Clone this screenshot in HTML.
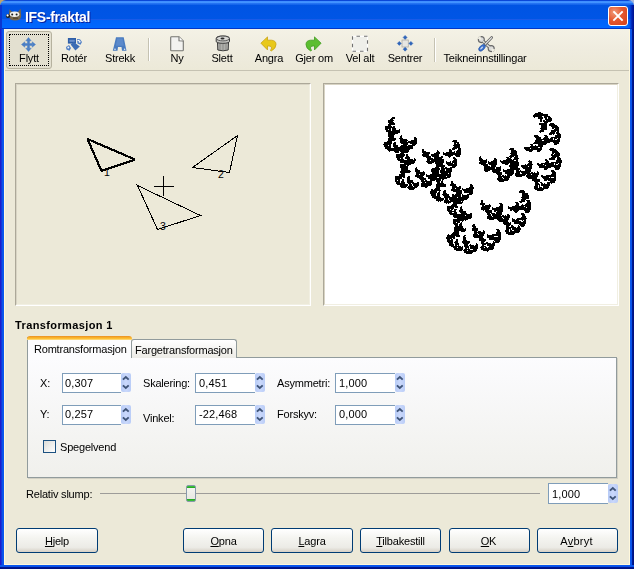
<!DOCTYPE html>
<html><head><meta charset="utf-8">
<style>
*{margin:0;padding:0;box-sizing:border-box}
html,body{width:634px;height:569px;overflow:hidden;background:#ECE9D8}
body{position:relative;font-family:"Liberation Sans",sans-serif;font-size:11px;color:#000}
.a{position:absolute}
.t{position:absolute;will-change:transform;font-size:11px;line-height:13px;white-space:nowrap;letter-spacing:-0.2px}
.c{text-align:center}
#title{left:0;top:0;width:634px;height:29px;border-radius:6px 6px 0 0;
background:linear-gradient(#0A47D8 0px,#0A47D8 1px,#3D8CFF 1px,#4496FF 3px,#2B7AF7 3px,#0E5FE8 5px,#0054E3 5px,#0055E5 16px,#0056E4 19px,#1A5BE8 19px,#1A5BE8 20px,#0063F8 20px,#0068FF 28px,#0037C8 28px,#0037C8 29px)}
#bl{left:0;top:29px;width:4px;height:540px;background:linear-gradient(90deg,#1C1CCC 0,#1C1CCC 1px,#0A50E8 2px,#0A5AF0 4px)}
#br{left:630px;top:29px;width:4px;height:540px;background:linear-gradient(90deg,#0A5AF0 0,#0A50E8 2px,#001C9A 2px,#000E7A 4px)}
#bb{left:0;top:565px;width:634px;height:4px;background:linear-gradient(#0A5AF0 0,#0A50E8 2px,#001C9A 2px,#000E7A 4px)}
#client{left:4px;top:29px;width:626px;height:536px;background:#ECE9D8;border-left:1px solid #FFF8DC;border-right:1px solid #FFF8DC;border-bottom:1px solid #FFF8DC}
#toolbar{left:5px;top:29px;width:624px;height:42px;background:linear-gradient(#F4F2E6 0,#EFECDF 50%,#ECE9D8 100%);border-bottom:1px solid #C5C2B2}
.sep{position:absolute;width:1px;background:#C5C2B2;border-right:1px solid #FFFFFF;width:2px}
.frame{position:absolute;border-top:1px solid #ACA899;border-left:1px solid #ACA899;border-right:1px solid #FFFFFF;border-bottom:1px solid #FFFFFF}
.frame>.in{position:absolute;left:0;top:0;right:0;bottom:0;border-top:1px solid #D8D4C4;border-left:1px solid #D8D4C4;border-right:1px solid #F1EFE2;border-bottom:1px solid #F1EFE2}
.entry{position:absolute;height:20px;background:#FFF;border:1px solid #7F9DB9;border-right:none}
.spin{position:absolute;width:10px;height:19px;border-radius:2px;background:linear-gradient(90deg,#B7CBF6,#CAD8FB 50%,#BACDF7)}
.btn{position:absolute;top:528px;height:25px;border:1px solid #003C74;border-radius:3px;background:linear-gradient(#FFFFFF 0,#F4F4F0 40%,#ECEBE6 80%,#D6D0C5 100%);text-align:center}
.u{text-decoration:underline}
</style></head><body>
<div class="a" style="left:0;top:0;width:10px;height:10px;background:#BFA46C"></div>
<div class="a" style="left:624px;top:0;width:10px;height:10px;background:#A9B7DA"></div>
<div id="title" class="a">
  <svg class="a" style="left:3px;top:5px" width="22" height="20" viewBox="0 0 22 20">
    <path d="M6 9 L6.5 4.3 L9 6.8 L15 6.8 L17.6 3.8 L18.2 11 Q18 15.6 12 15.6 Q7 15.6 6 12Z" fill="#76674C"/>
    <ellipse cx="11.6" cy="9.2" rx="4.8" ry="2.7" fill="#F2F2EE"/>
    <circle cx="9.2" cy="9.5" r="1" fill="#1a1a1a"/><circle cx="13.6" cy="9.5" r="1" fill="#1a1a1a"/>
    <circle cx="5" cy="11" r="2.1" fill="#1a1a1a"/><circle cx="4.6" cy="10.4" r="1.1" fill="#fff"/>
    <rect x="10" y="12.4" width="5" height="1.6" fill="#5A4A30"/>
  </svg>
  <div class="a" style="will-change:transform;left:25px;top:9px;color:#fff;font-weight:bold;font-size:14px;line-height:16px;text-shadow:1px 1px 0 #0A1E9A;letter-spacing:-0.3px">IFS-fraktal</div>
  <div class="a" style="left:608px;top:6px;width:20px;height:20px;border:1px solid #fff;border-radius:3px;background:radial-gradient(circle at 30% 30%,#F09A7A 0,#E5582F 45%,#D2401A 100%)">
    <svg class="a" style="left:0;top:0" width="18" height="18"><path d="M5 5 L13 13 M13 5 L5 13" stroke="#fff" stroke-width="1.8" stroke-linecap="square"/></svg>
  </div>
</div>
<div class="a" style="left:628px;top:5px;width:6px;height:24px;background:linear-gradient(90deg,rgba(0,40,200,0) 0,rgba(0,40,200,0.35) 2px,#0020B0 4px,#00128A 6px)"></div><div class="a" style="left:0;top:5px;width:2px;height:24px;background:#0A36D0"></div>
<div id="bl" class="a"></div><div id="br" class="a"></div><div id="bb" class="a"></div>
<div id="client" class="a"></div>
<div id="toolbar" class="a"></div>

<!-- toolbar -->
<div class="a" style="left:6px;top:31px;width:46px;height:38px;border:1px solid #B6B29F;border-radius:3px;background:#E3E0D0"></div>
<div class="a" style="left:9px;top:34px;width:40px;height:32px;border:1px dotted #000"></div>
<svg class="a" style="left:21px;top:37px" width="15" height="15" viewBox="0 0 15 15">
  <path d="M7.5 0.5 L10.2 3.8 L4.8 3.8Z M7.5 14.5 L10.2 11.2 L4.8 11.2Z M0.5 7.5 L3.8 4.8 L3.8 10.2Z M14.5 7.5 L11.2 4.8 L11.2 10.2Z M6.5 3.5 H8.5 V6.5 H11.5 V8.5 H8.5 V11.5 H6.5 V8.5 H3.5 V6.5 H6.5Z" fill="#4A7EC4" stroke="#4A7EC4" stroke-width="0.5" stroke-linejoin="round"/>
</svg>
<div class="t c" style="left:8px;width:42px;top:52px">Flytt</div>

<svg class="a" style="left:63px;top:34px" width="22" height="20" viewBox="0 0 22 20">
  <rect x="4.9" y="4" width="8.1" height="5.6" fill="#2F5FA8"/><rect x="6.4" y="5.8" width="5.3" height="2" fill="#6A90CC"/>
  <path d="M3 13 L6 11 L8 14 L6.5 16.8 L3.5 15.5Z" fill="#4F7EC4"/><circle cx="5.3" cy="13.6" r="1" fill="#F4F6FA"/>
  <path d="M14 5 L17 5.2 L19 8 L17.5 10.8 L14.5 9.5Z" fill="#4F7EC4"/><circle cx="16.6" cy="7.8" r="1" fill="#F4F6FA"/><rect x="14.5" y="6" width="2" height="1" fill="#fff"/>
  <path d="M10.8 8 L16.8 12.4 L12.4 16.6 L7.6 10.4Z" fill="#3D6DB5"/>
</svg>
<div class="t c" style="left:53px;width:42px;top:52px">Rotér</div>

<svg class="a" style="left:105px;top:32px" width="24" height="22" viewBox="0 0 24 22">
  <path d="M11 5.2 L18.7 5.2 L21.5 18.7 L17 18.7 L16.5 15 L13 15 L12.5 18.7 L7.8 18.7Z" fill="#4A7CC0"/>
  <path d="M12.2 6.5 L17.5 6.5 L18.8 13.8 L10.8 13.8Z" fill="#5C8ACB"/>
  <circle cx="10" cy="17.2" r="0.8" fill="#E8EEF8"/><circle cx="19.6" cy="17.2" r="0.8" fill="#E8EEF8"/>
</svg>
<div class="t c" style="left:98px;width:44px;top:52px">Strekk</div>

<div class="sep" style="left:148px;top:38px;height:23px"></div>

<svg class="a" style="left:166px;top:33px" width="22" height="20" viewBox="0 0 22 20">
  <path d="M4.7 4.5 Q4.7 3.7 5.5 3.7 L13 3.7 L17.3 8 L17.3 17 Q17.3 17.8 16.5 17.8 L5.5 17.8 Q4.7 17.8 4.7 17Z" fill="#F2F2F0" stroke="#747470" stroke-width="1.1"/>
  <path d="M13 3.7 L13 7.8 L17.3 8" fill="#fff" stroke="#747470" stroke-width="1.1"/>
</svg>
<div class="t c" style="left:155px;width:44px;top:52px">Ny</div>

<svg class="a" style="left:212px;top:33px" width="22" height="20" viewBox="0 0 22 20">
  <path d="M5.5 9.5 L16.5 9.5 L16.2 17 Q11 18.6 5.8 17Z" fill="#B0B0AC" stroke="#3A3A3A" stroke-width="1"/>
  <path d="M8 11 V17 M11 11 V17.5 M14 11 V17" stroke="#8A8A86" stroke-width="1"/>
  <path d="M4.2 5.5 Q4.2 3 10.9 3 Q17.5 3 17.5 5.5 V8.3 Q17.5 10.3 10.9 10.3 Q4.2 10.3 4.2 8.3Z" fill="#C4C4C0" stroke="#3A3A3A" stroke-width="1"/>
  <ellipse cx="10.9" cy="5.5" rx="6.4" ry="2.4" fill="#D8D8D4" stroke="#3A3A3A" stroke-width="0.8"/>
  <ellipse cx="10.5" cy="5.5" rx="2" ry="1" fill="#2A2A2A"/>
</svg>
<div class="t c" style="left:200px;width:44px;top:52px">Slett</div>

<svg class="a" style="left:257px;top:33px" width="22" height="20" viewBox="0 0 22 20">
  <path d="M3.9 10.2 L10.5 3.9 L10.5 7.2 L14.5 7.2 Q19 7.5 19 11.5 Q19 15.5 14.2 18 L13.5 17.5 Q15.5 14.5 14 13.5 Q13 13 11.5 13 L10.5 13 L10.5 16.9Z" fill="#E8C81A" stroke="#C9A212" stroke-width="0.8" stroke-linejoin="round"/>
</svg>
<div class="t c" style="left:246px;width:46px;top:52px">Angra</div>

<svg class="a" style="left:302px;top:33px" width="22" height="20" viewBox="0 0 22 20">
  <path transform="translate(23,0) scale(-1,1)" d="M3.9 10.2 L10.5 3.9 L10.5 7.2 L14.5 7.2 Q19 7.5 19 11.5 Q19 15.5 14.2 18 L13.5 17.5 Q15.5 14.5 14 13.5 Q13 13 11.5 13 L10.5 13 L10.5 16.9Z" fill="#5CBE30" stroke="#3F9A1E" stroke-width="0.8" stroke-linejoin="round"/>
</svg>
<div class="t c" style="left:290px;width:48px;top:52px">Gjer om</div>

<svg class="a" style="left:349px;top:33px" width="22" height="20" viewBox="0 0 22 20">
  <rect x="3.5" y="3.3" width="15" height="15" fill="#EFEFEA" stroke="#FFFFFF" stroke-width="1.2"/>
  <rect x="3.5" y="3.3" width="15" height="15" fill="none" stroke="#707070" stroke-width="1.1" stroke-dasharray="3.5 4" stroke-dashoffset="-4"/>
</svg>
<div class="t c" style="left:336px;width:48px;top:52px">Vel alt</div>

<svg class="a" style="left:394px;top:33px" width="22" height="20" viewBox="0 0 22 20">
  <rect x="8" y="7" width="6.3" height="7" fill="#E6E6E2" stroke="#ABABA6" stroke-width="0.8"/>
  <path d="M11.1 2.4 L13.1 4.4 L11.1 6.4 L9.1 4.4Z M11.1 14.2 L13.1 16.2 L11.1 18.2 L9.1 16.2Z M5.3 8.4 L7.3 10.4 L5.3 12.4 L3.3 10.4Z M16.9 8.4 L18.9 10.4 L16.9 12.4 L14.9 10.4Z" fill="#2F64B8" stroke="#2F64B8" stroke-width="0.5" stroke-linejoin="round"/>
</svg>
<div class="t c" style="left:380px;width:50px;top:52px">Sentrer</div>

<div class="sep" style="left:434px;top:38px;height:24px"></div>

<svg class="a" style="left:472px;top:32px" width="28" height="22" viewBox="0 0 28 22">
  <path d="M11.3 9.6 L17.6 15.2" stroke="#666" stroke-width="3.3" stroke-linecap="round"/>
  <circle cx="9.3" cy="7.6" r="3" fill="#DCDCDA" stroke="#666" stroke-width="1.1"/>
  <circle cx="19.2" cy="16.6" r="3" fill="#DCDCDA" stroke="#666" stroke-width="1.1"/>
  <path d="M11.3 9.6 L17.6 15.2" stroke="#DCDCDA" stroke-width="1.5" stroke-linecap="round"/>
  <path d="M5.2 6.6 L9.4 7.9 L8.3 3.6Z M23.3 17.6 L19.2 16.4 L20.4 20.6Z" fill="#F0EEE2"/>
  <path d="M19.6 5.6 L13.2 12.2" stroke="#666" stroke-width="2.8" stroke-linecap="round"/>
  <path d="M19.6 5.6 L13.2 12.2" stroke="#EAEAE8" stroke-width="1.1" stroke-linecap="round"/>
  <ellipse cx="10" cy="15.8" rx="4" ry="2.3" transform="rotate(-45 10 15.8)" fill="#3A70CC" stroke="#2A58A8" stroke-width="0.7"/>
  <ellipse cx="9.6" cy="16" rx="1.9" ry="0.8" transform="rotate(-45 9.6 16)" fill="#C4D4F2"/>
</svg>
<div class="t c" style="left:440px;width:90px;top:52px">Teikneinnstillingar</div>

<!-- previews -->
<div class="frame" style="left:15px;top:83px;width:296px;height:223px"><div class="in"></div></div>
<svg class="a" style="left:17px;top:85px" width="292" height="219" shape-rendering="crispEdges">
  <g transform="translate(-17,-85)" fill="none" stroke="#000">
    <path d="M87.5 139 L135 159.5 L101.5 171Z" stroke-width="2.2" stroke-linejoin="bevel"/>
    <path d="M237.5 135.5 L192.5 167.5 L229.5 172.5Z" stroke-width="1"/>
    <path d="M137.5 185.5 L200.5 215.5 L157.5 229.5Z" stroke-width="1"/>
    <path d="M153.5 186.5 H173.5 M163.5 176 V196" stroke-width="1"/>
  </g>
  <g transform="translate(-17,-85)" font-size="10.5" font-family="Liberation Sans" fill="#000">
    <text x="104" y="176">1</text><text x="218" y="178">2</text><text x="160" y="230">3</text>
  </g>
</svg>
<div class="frame" style="left:323px;top:83px;width:296px;height:223px"><div class="in"></div></div>
<svg class="a" style="left:325px;top:85px;background:#fff" width="292" height="219" shape-rendering="crispEdges">
  <path d="M213 27h3v1h-3zM210 28h8v1h-8zM209 29h14v1h-14zM208 30h15v1h-15zM208 31h9v1h-9zM219 31h6v1h-6zM67 32h3v1h-3zM209 32h1v1h-1zM213 32h5v1h-5zM219 32h3v1h-3zM223 32h3v1h-3zM66 33h4v1h-4zM213 33h5v1h-5zM220 33h2v1h-2zM223 33h4v1h-4zM65 34h3v1h-3zM215 34h2v1h-2zM220 34h7v1h-7zM63 35h6v1h-6zM215 35h2v1h-2zM218 35h2v1h-2zM221 35h6v1h-6zM63 36h5v1h-5zM215 36h2v1h-2zM218 36h8v1h-8zM63 37h6v1h-6zM219 37h4v1h-4zM64 38h6v1h-6zM214 38h8v1h-8zM225 38h4v1h-4zM63 39h7v1h-7zM214 39h8v1h-8zM224 39h6v1h-6zM63 40h3v1h-3zM216 40h6v1h-6zM224 40h8v1h-8zM60 41h7v1h-7zM68 41h2v1h-2zM216 41h6v1h-6zM226 41h7v1h-7zM60 42h10v1h-10zM216 42h6v1h-6zM227 42h7v1h-7zM60 43h6v1h-6zM67 43h4v1h-4zM215 43h7v1h-7zM227 43h2v1h-2zM230 43h4v1h-4zM60 44h3v1h-3zM64 44h2v1h-2zM67 44h4v1h-4zM74 44h1v1h-1zM216 44h6v1h-6zM229 44h5v1h-5zM61 45h5v1h-5zM67 45h8v1h-8zM215 45h4v1h-4zM226 45h8v1h-8zM61 46h14v1h-14zM214 46h5v1h-5zM226 46h5v1h-5zM232 46h2v1h-2zM63 47h12v1h-12zM215 47h1v1h-1zM225 47h5v1h-5zM231 47h3v1h-3zM63 48h10v1h-10zM224 48h6v1h-6zM231 48h4v1h-4zM63 49h7v1h-7zM224 49h3v1h-3zM228 49h1v1h-1zM232 49h4v1h-4zM63 50h6v1h-6zM76 50h1v1h-1zM209 50h4v1h-4zM219 50h3v1h-3zM230 50h6v1h-6zM63 51h6v1h-6zM75 51h2v1h-2zM209 51h5v1h-5zM220 51h3v1h-3zM230 51h6v1h-6zM64 52h5v1h-5zM75 52h2v1h-2zM89 52h2v1h-2zM210 52h6v1h-6zM219 52h4v1h-4zM226 52h10v1h-10zM63 53h8v1h-8zM74 53h4v1h-4zM89 53h3v1h-3zM211 53h5v1h-5zM218 53h6v1h-6zM225 53h3v1h-3zM229 53h3v1h-3zM233 53h2v1h-2zM63 54h8v1h-8zM75 54h7v1h-7zM89 54h3v1h-3zM211 54h17v1h-17zM229 54h1v1h-1zM232 54h3v1h-3zM63 55h7v1h-7zM75 55h8v1h-8zM86 55h6v1h-6zM128 55h4v1h-4zM210 55h7v1h-7zM219 55h16v1h-16zM62 56h5v1h-5zM75 56h7v1h-7zM83 56h9v1h-9zM127 56h5v1h-5zM210 56h25v1h-25zM59 57h8v1h-8zM69 57h2v1h-2zM75 57h17v1h-17zM129 57h5v1h-5zM209 57h16v1h-16zM228 57h6v1h-6zM59 58h8v1h-8zM68 58h3v1h-3zM76 58h7v1h-7zM85 58h7v1h-7zM129 58h2v1h-2zM132 58h2v1h-2zM208 58h14v1h-14zM229 58h5v1h-5zM58 59h8v1h-8zM68 59h3v1h-3zM78 59h5v1h-5zM87 59h4v1h-4zM129 59h6v1h-6zM205 59h3v1h-3zM213 59h8v1h-8zM229 59h3v1h-3zM59 60h4v1h-4zM64 60h2v1h-2zM68 60h5v1h-5zM76 60h6v1h-6zM83 60h7v1h-7zM128 60h7v1h-7zM206 60h2v1h-2zM210 60h1v1h-1zM213 60h5v1h-5zM59 61h7v1h-7zM68 61h5v1h-5zM75 61h13v1h-13zM129 61h6v1h-6zM205 61h13v1h-13zM60 62h6v1h-6zM69 62h19v1h-19zM128 62h7v1h-7zM199 62h14v1h-14zM215 62h2v1h-2zM60 63h28v1h-28zM127 63h5v1h-5zM133 63h3v1h-3zM185 63h4v1h-4zM199 63h6v1h-6zM206 63h11v1h-11zM225 63h4v1h-4zM62 64h23v1h-23zM97 64h2v1h-2zM124 64h2v1h-2zM127 64h3v1h-3zM133 64h3v1h-3zM184 64h5v1h-5zM200 64h17v1h-17zM224 64h7v1h-7zM63 65h21v1h-21zM97 65h2v1h-2zM112 65h1v1h-1zM124 65h3v1h-3zM132 65h4v1h-4zM186 65h5v1h-5zM201 65h7v1h-7zM212 65h4v1h-4zM225 65h7v1h-7zM64 66h1v1h-1zM69 66h5v1h-5zM75 66h9v1h-9zM97 66h4v1h-4zM112 66h2v1h-2zM124 66h3v1h-3zM129 66h1v1h-1zM131 66h5v1h-5zM186 66h6v1h-6zM204 66h3v1h-3zM212 66h3v1h-3zM227 66h6v1h-6zM70 67h4v1h-4zM76 67h7v1h-7zM97 67h8v1h-8zM111 67h4v1h-4zM118 67h1v1h-1zM121 67h9v1h-9zM131 67h5v1h-5zM186 67h6v1h-6zM227 67h7v1h-7zM75 68h4v1h-4zM98 68h7v1h-7zM109 68h6v1h-6zM118 68h18v1h-18zM185 68h7v1h-7zM227 68h2v1h-2zM230 68h5v1h-5zM71 69h9v1h-9zM81 69h2v1h-2zM97 69h7v1h-7zM106 69h8v1h-8zM118 69h18v1h-18zM186 69h6v1h-6zM226 69h2v1h-2zM229 69h6v1h-6zM71 70h9v1h-9zM81 70h2v1h-2zM97 70h7v1h-7zM106 70h8v1h-8zM120 70h8v1h-8zM130 70h5v1h-5zM185 70h8v1h-8zM226 70h9v1h-9zM71 71h8v1h-8zM81 71h3v1h-3zM98 71h8v1h-8zM107 71h7v1h-7zM116 71h2v1h-2zM123 71h3v1h-3zM131 71h4v1h-4zM155 71h1v1h-1zM184 71h5v1h-5zM190 71h3v1h-3zM227 71h7v1h-7zM71 72h7v1h-7zM80 72h5v1h-5zM101 72h5v1h-5zM109 72h9v1h-9zM124 72h1v1h-1zM128 72h2v1h-2zM154 72h2v1h-2zM181 72h3v1h-3zM185 72h2v1h-2zM189 72h4v1h-4zM226 72h5v1h-5zM232 72h3v1h-3zM72 73h3v1h-3zM76 73h2v1h-2zM80 73h5v1h-5zM89 73h1v1h-1zM102 73h6v1h-6zM109 73h8v1h-8zM128 73h3v1h-3zM154 73h3v1h-3zM169 73h2v1h-2zM182 73h4v1h-4zM189 73h5v1h-5zM224 73h6v1h-6zM232 73h4v1h-4zM72 74h7v1h-7zM82 74h6v1h-6zM89 74h2v1h-2zM102 74h17v1h-17zM129 74h3v1h-3zM154 74h4v1h-4zM161 74h1v1h-1zM169 74h3v1h-3zM181 74h6v1h-6zM188 74h5v1h-5zM220 74h2v1h-2zM224 74h6v1h-6zM232 74h4v1h-4zM73 75h18v1h-18zM102 75h3v1h-3zM106 75h13v1h-13zM128 75h4v1h-4zM154 75h8v1h-8zM168 75h4v1h-4zM175 75h1v1h-1zM178 75h11v1h-11zM191 75h2v1h-2zM204 75h1v1h-1zM220 75h3v1h-3zM231 75h6v1h-6zM75 76h15v1h-15zM101 76h18v1h-18zM121 76h1v1h-1zM125 76h1v1h-1zM127 76h5v1h-5zM155 76h7v1h-7zM163 76h1v1h-1zM166 76h6v1h-6zM175 76h18v1h-18zM203 76h4v1h-4zM221 76h3v1h-3zM231 76h6v1h-6zM75 77h15v1h-15zM102 77h7v1h-7zM110 77h9v1h-9zM121 77h5v1h-5zM127 77h5v1h-5zM154 77h8v1h-8zM163 77h9v1h-9zM176 77h18v1h-18zM204 77h3v1h-3zM220 77h4v1h-4zM226 77h11v1h-11zM79 78h10v1h-10zM103 78h4v1h-4zM110 78h8v1h-8zM121 78h7v1h-7zM129 78h3v1h-3zM154 78h7v1h-7zM163 78h9v1h-9zM177 78h7v1h-7zM185 78h9v1h-9zM203 78h4v1h-4zM212 78h2v1h-2zM216 78h13v1h-13zM230 78h3v1h-3zM234 78h2v1h-2zM75 79h11v1h-11zM111 79h7v1h-7zM122 79h10v1h-10zM156 79h7v1h-7zM164 79h8v1h-8zM180 79h3v1h-3zM185 79h9v1h-9zM200 79h1v1h-1zM202 79h6v1h-6zM212 79h6v1h-6zM219 79h10v1h-10zM230 79h1v1h-1zM233 79h3v1h-3zM75 80h6v1h-6zM82 80h2v1h-2zM111 80h9v1h-9zM123 80h9v1h-9zM158 80h5v1h-5zM166 80h5v1h-5zM184 80h10v1h-10zM196 80h11v1h-11zM213 80h7v1h-7zM221 80h15v1h-15zM75 81h8v1h-8zM111 81h9v1h-9zM127 81h4v1h-4zM159 81h6v1h-6zM166 81h5v1h-5zM175 81h1v1h-1zM184 81h9v1h-9zM196 81h7v1h-7zM204 81h3v1h-3zM214 81h22v1h-22zM75 82h8v1h-8zM91 82h1v1h-1zM110 82h4v1h-4zM116 82h3v1h-3zM120 82h2v1h-2zM125 82h5v1h-5zM159 82h11v1h-11zM171 82h5v1h-5zM185 82h8v1h-8zM197 82h10v1h-10zM214 82h12v1h-12zM229 82h6v1h-6zM76 83h7v1h-7zM90 83h2v1h-2zM107 83h8v1h-8zM116 83h11v1h-11zM159 83h11v1h-11zM171 83h5v1h-5zM185 83h10v1h-10zM198 83h9v1h-9zM219 83h4v1h-4zM230 83h5v1h-5zM76 84h7v1h-7zM90 84h3v1h-3zM106 84h9v1h-9zM116 84h4v1h-4zM121 84h6v1h-6zM159 84h17v1h-17zM178 84h1v1h-1zM182 84h13v1h-13zM200 84h6v1h-6zM219 84h3v1h-3zM230 84h4v1h-4zM76 85h9v1h-9zM90 85h5v1h-5zM106 85h8v1h-8zM115 85h5v1h-5zM121 85h6v1h-6zM159 85h6v1h-6zM167 85h9v1h-9zM178 85h11v1h-11zM191 85h3v1h-3zM195 85h1v1h-1zM200 85h6v1h-6zM226 85h3v1h-3zM75 86h11v1h-11zM90 86h5v1h-5zM98 86h1v1h-1zM106 86h8v1h-8zM115 86h12v1h-12zM160 86h3v1h-3zM167 86h8v1h-8zM178 86h11v1h-11zM191 86h15v1h-15zM212 86h1v1h-1zM226 86h4v1h-4zM75 87h10v1h-10zM91 87h9v1h-9zM107 87h7v1h-7zM115 87h11v1h-11zM168 87h9v1h-9zM180 87h9v1h-9zM191 87h4v1h-4zM196 87h9v1h-9zM206 87h2v1h-2zM209 87h1v1h-1zM212 87h2v1h-2zM227 87h4v1h-4zM76 88h4v1h-4zM91 88h9v1h-9zM107 88h7v1h-7zM116 88h7v1h-7zM124 88h2v1h-2zM171 88h6v1h-6zM180 88h9v1h-9zM190 88h5v1h-5zM197 88h17v1h-17zM227 88h4v1h-4zM74 89h6v1h-6zM91 89h3v1h-3zM95 89h5v1h-5zM101 89h1v1h-1zM105 89h21v1h-21zM172 89h5v1h-5zM182 89h6v1h-6zM190 89h11v1h-11zM202 89h4v1h-4zM207 89h7v1h-7zM226 89h5v1h-5zM74 90h6v1h-6zM90 90h9v1h-9zM101 90h25v1h-25zM173 90h3v1h-3zM177 90h2v1h-2zM180 90h1v1h-1zM182 90h5v1h-5zM190 90h10v1h-10zM201 90h12v1h-12zM216 90h2v1h-2zM221 90h10v1h-10zM70 91h10v1h-10zM83 91h2v1h-2zM90 91h8v1h-8zM101 91h20v1h-20zM122 91h4v1h-4zM173 91h12v1h-12zM191 91h6v1h-6zM201 91h12v1h-12zM216 91h15v1h-15zM70 92h7v1h-7zM78 92h2v1h-2zM82 92h3v1h-3zM92 92h7v1h-7zM103 92h9v1h-9zM114 92h11v1h-11zM173 92h4v1h-4zM178 92h7v1h-7zM202 92h10v1h-10zM217 92h7v1h-7zM225 92h1v1h-1zM229 92h2v1h-2zM70 93h7v1h-7zM82 93h3v1h-3zM94 93h7v1h-7zM103 93h19v1h-19zM172 93h6v1h-6zM179 93h5v1h-5zM203 93h9v1h-9zM218 93h13v1h-13zM70 94h5v1h-5zM77 94h2v1h-2zM82 94h3v1h-3zM95 94h6v1h-6zM105 94h11v1h-11zM117 94h2v1h-2zM172 94h12v1h-12zM207 94h8v1h-8zM219 94h12v1h-12zM70 95h2v1h-2zM73 95h2v1h-2zM77 95h2v1h-2zM82 95h6v1h-6zM96 95h3v1h-3zM100 95h2v1h-2zM105 95h5v1h-5zM111 95h5v1h-5zM117 95h1v1h-1zM173 95h10v1h-10zM207 95h8v1h-8zM219 95h3v1h-3zM223 95h8v1h-8zM70 96h5v1h-5zM76 96h3v1h-3zM82 96h6v1h-6zM96 96h11v1h-11zM111 96h4v1h-4zM116 96h2v1h-2zM126 96h2v1h-2zM174 96h5v1h-5zM209 96h6v1h-6zM225 96h5v1h-5zM71 97h4v1h-4zM76 97h4v1h-4zM82 97h7v1h-7zM92 97h2v1h-2zM97 97h3v1h-3zM101 97h6v1h-6zM112 97h3v1h-3zM116 97h2v1h-2zM126 97h2v1h-2zM210 97h3v1h-3zM215 97h2v1h-2zM222 97h8v1h-8zM71 98h9v1h-9zM83 98h3v1h-3zM87 98h7v1h-7zM96 98h11v1h-11zM112 98h7v1h-7zM126 98h3v1h-3zM210 98h4v1h-4zM216 98h2v1h-2zM219 98h1v1h-1zM222 98h3v1h-3zM226 98h1v1h-1zM72 99h11v1h-11zM84 99h3v1h-3zM88 99h6v1h-6zM96 99h11v1h-11zM111 99h10v1h-10zM125 99h6v1h-6zM145 99h2v1h-2zM210 99h5v1h-5zM216 99h9v1h-9zM75 100h8v1h-8zM84 100h3v1h-3zM88 100h6v1h-6zM96 100h10v1h-10zM111 100h10v1h-10zM125 100h6v1h-6zM145 100h3v1h-3zM210 100h3v1h-3zM214 100h1v1h-1zM216 100h9v1h-9zM75 101h7v1h-7zM83 101h5v1h-5zM89 101h4v1h-4zM96 101h7v1h-7zM111 101h10v1h-10zM127 101h5v1h-5zM134 101h2v1h-2zM145 101h3v1h-3zM209 101h4v1h-4zM214 101h1v1h-1zM218 101h6v1h-6zM76 102h5v1h-5zM82 102h10v1h-10zM100 102h2v1h-2zM111 102h4v1h-4zM127 102h9v1h-9zM144 102h5v1h-5zM209 102h4v1h-4zM214 102h3v1h-3zM218 102h6v1h-6zM83 103h7v1h-7zM110 103h5v1h-5zM127 103h3v1h-3zM131 103h5v1h-5zM137 103h1v1h-1zM141 103h8v1h-8zM209 103h14v1h-14zM84 104h5v1h-5zM106 104h2v1h-2zM109 104h6v1h-6zM126 104h9v1h-9zM137 104h11v1h-11zM210 104h9v1h-9zM106 105h10v1h-10zM119 105h2v1h-2zM126 105h11v1h-11zM138 105h10v1h-10zM195 105h4v1h-4zM212 105h6v1h-6zM105 106h7v1h-7zM114 106h1v1h-1zM118 106h3v1h-3zM128 106h9v1h-9zM139 106h9v1h-9zM194 106h6v1h-6zM105 107h7v1h-7zM113 107h2v1h-2zM118 107h3v1h-3zM131 107h6v1h-6zM139 107h9v1h-9zM194 107h6v1h-6zM105 108h6v1h-6zM112 108h3v1h-3zM118 108h4v1h-4zM131 108h6v1h-6zM144 108h4v1h-4zM197 108h6v1h-6zM106 109h5v1h-5zM112 109h3v1h-3zM117 109h7v1h-7zM127 109h2v1h-2zM130 109h6v1h-6zM137 109h1v1h-1zM142 109h5v1h-5zM197 109h6v1h-6zM106 110h5v1h-5zM112 110h3v1h-3zM118 110h6v1h-6zM127 110h9v1h-9zM137 110h7v1h-7zM197 110h7v1h-7zM107 111h8v1h-8zM119 111h6v1h-6zM127 111h9v1h-9zM137 111h7v1h-7zM197 111h7v1h-7zM107 112h9v1h-9zM119 112h13v1h-13zM133 112h11v1h-11zM196 112h8v1h-8zM109 113h10v1h-10zM120 113h3v1h-3zM124 113h19v1h-19zM197 113h7v1h-7zM111 114h8v1h-8zM120 114h3v1h-3zM124 114h18v1h-18zM196 114h5v1h-5zM111 115h7v1h-7zM119 115h5v1h-5zM125 115h14v1h-14zM156 115h2v1h-2zM196 115h4v1h-4zM201 115h4v1h-4zM113 116h1v1h-1zM115 116h1v1h-1zM119 116h17v1h-17zM137 116h1v1h-1zM156 116h2v1h-2zM194 116h6v1h-6zM202 116h3v1h-3zM119 117h7v1h-7zM128 117h10v1h-10zM156 117h2v1h-2zM190 117h3v1h-3zM195 117h2v1h-2zM202 117h4v1h-4zM121 118h1v1h-1zM123 118h1v1h-1zM128 118h9v1h-9zM155 118h5v1h-5zM174 118h3v1h-3zM191 118h3v1h-3zM201 118h5v1h-5zM127 119h5v1h-5zM155 119h5v1h-5zM164 119h1v1h-1zM175 119h3v1h-3zM191 119h3v1h-3zM197 119h1v1h-1zM200 119h6v1h-6zM126 120h6v1h-6zM157 120h2v1h-2zM160 120h6v1h-6zM175 120h3v1h-3zM190 120h4v1h-4zM196 120h10v1h-10zM122 121h11v1h-11zM136 121h1v1h-1zM157 121h9v1h-9zM174 121h4v1h-4zM183 121h1v1h-1zM187 121h12v1h-12zM200 121h6v1h-6zM122 122h7v1h-7zM130 122h3v1h-3zM135 122h2v1h-2zM156 122h9v1h-9zM167 122h1v1h-1zM171 122h7v1h-7zM183 122h18v1h-18zM202 122h4v1h-4zM122 123h7v1h-7zM135 123h2v1h-2zM156 123h9v1h-9zM167 123h11v1h-11zM183 123h23v1h-23zM122 124h3v1h-3zM126 124h2v1h-2zM129 124h3v1h-3zM135 124h3v1h-3zM156 124h8v1h-8zM167 124h11v1h-11zM185 124h21v1h-21zM122 125h5v1h-5zM129 125h2v1h-2zM134 125h4v1h-4zM158 125h1v1h-1zM160 125h7v1h-7zM169 125h9v1h-9zM185 125h2v1h-2zM188 125h6v1h-6zM199 125h6v1h-6zM123 126h8v1h-8zM134 126h7v1h-7zM160 126h7v1h-7zM169 126h2v1h-2zM172 126h6v1h-6zM189 126h4v1h-4zM200 126h5v1h-5zM124 127h3v1h-3zM129 127h3v1h-3zM135 127h6v1h-6zM161 127h6v1h-6zM171 127h6v1h-6zM190 127h2v1h-2zM200 127h4v1h-4zM124 128h8v1h-8zM136 128h6v1h-6zM145 128h2v1h-2zM162 128h3v1h-3zM166 128h4v1h-4zM171 128h6v1h-6zM196 128h3v1h-3zM125 129h22v1h-22zM162 129h4v1h-4zM167 129h10v1h-10zM182 129h2v1h-2zM196 129h4v1h-4zM128 130h12v1h-12zM141 130h6v1h-6zM163 130h3v1h-3zM167 130h9v1h-9zM177 130h2v1h-2zM180 130h1v1h-1zM182 130h3v1h-3zM197 130h3v1h-3zM128 131h19v1h-19zM162 131h5v1h-5zM168 131h17v1h-17zM197 131h4v1h-4zM129 132h18v1h-18zM162 132h15v1h-15zM178 132h7v1h-7zM196 132h5v1h-5zM132 133h14v1h-14zM162 133h16v1h-16zM179 133h5v1h-5zM187 133h1v1h-1zM192 133h10v1h-10zM128 134h15v1h-15zM164 134h5v1h-5zM172 134h12v1h-12zM187 134h3v1h-3zM191 134h10v1h-10zM128 135h11v1h-11zM140 135h1v1h-1zM173 135h10v1h-10zM187 135h7v1h-7zM197 135h1v1h-1zM199 135h2v1h-2zM128 136h7v1h-7zM137 136h1v1h-1zM174 136h9v1h-9zM187 136h9v1h-9zM198 136h3v1h-3zM128 137h3v1h-3zM132 137h3v1h-3zM136 137h1v1h-1zM178 137h6v1h-6zM185 137h1v1h-1zM189 137h12v1h-12zM128 138h5v1h-5zM135 138h2v1h-2zM178 138h8v1h-8zM189 138h12v1h-12zM129 139h4v1h-4zM134 139h3v1h-3zM148 139h2v1h-2zM179 139h7v1h-7zM194 139h6v1h-6zM130 140h3v1h-3zM134 140h3v1h-3zM147 140h3v1h-3zM181 140h4v1h-4zM186 140h2v1h-2zM193 140h1v1h-1zM195 140h5v1h-5zM130 141h8v1h-8zM147 141h4v1h-4zM181 141h3v1h-3zM186 141h3v1h-3zM193 141h2v1h-2zM196 141h3v1h-3zM129 142h9v1h-9zM148 142h3v1h-3zM181 142h10v1h-10zM192 142h3v1h-3zM129 143h10v1h-10zM140 143h1v1h-1zM147 143h6v1h-6zM181 143h5v1h-5zM187 143h9v1h-9zM129 144h12v1h-12zM147 144h6v1h-6zM171 144h3v1h-3zM181 144h3v1h-3zM185 144h1v1h-1zM187 144h9v1h-9zM129 145h12v1h-12zM147 145h6v1h-6zM158 145h1v1h-1zM172 145h3v1h-3zM180 145h4v1h-4zM185 145h2v1h-2zM189 145h6v1h-6zM129 146h5v1h-5zM136 146h4v1h-4zM149 146h3v1h-3zM153 146h3v1h-3zM158 146h2v1h-2zM172 146h3v1h-3zM180 146h4v1h-4zM185 146h10v1h-10zM128 147h6v1h-6zM149 147h11v1h-11zM171 147h5v1h-5zM181 147h13v1h-13zM127 148h7v1h-7zM149 148h3v1h-3zM153 148h7v1h-7zM171 148h5v1h-5zM181 148h9v1h-9zM123 149h1v1h-1zM126 149h8v1h-8zM148 149h5v1h-5zM154 149h5v1h-5zM162 149h1v1h-1zM167 149h9v1h-9zM183 149h6v1h-6zM122 150h13v1h-13zM139 150h2v1h-2zM148 150h11v1h-11zM162 150h14v1h-14zM122 151h8v1h-8zM131 151h4v1h-4zM138 151h2v1h-2zM148 151h10v1h-10zM162 151h7v1h-7zM173 151h3v1h-3zM121 152h9v1h-9zM138 152h3v1h-3zM149 152h9v1h-9zM162 152h14v1h-14zM121 153h6v1h-6zM128 153h2v1h-2zM138 153h3v1h-3zM154 153h5v1h-5zM164 153h12v1h-12zM122 154h3v1h-3zM126 154h2v1h-2zM131 154h2v1h-2zM138 154h3v1h-3zM154 154h7v1h-7zM164 154h12v1h-12zM122 155h6v1h-6zM131 155h2v1h-2zM138 155h4v1h-4zM154 155h7v1h-7zM169 155h6v1h-6zM122 156h6v1h-6zM130 156h3v1h-3zM137 156h8v1h-8zM156 156h4v1h-4zM168 156h1v1h-1zM170 156h5v1h-5zM123 157h5v1h-5zM129 157h4v1h-4zM137 157h8v1h-8zM156 157h3v1h-3zM161 157h2v1h-2zM168 157h6v1h-6zM124 158h4v1h-4zM130 158h4v1h-4zM138 158h6v1h-6zM151 158h1v1h-1zM156 158h10v1h-10zM167 158h3v1h-3zM124 159h5v1h-5zM130 159h4v1h-4zM139 159h4v1h-4zM145 159h1v1h-1zM151 159h2v1h-2zM157 159h4v1h-4zM162 159h8v1h-8zM124 160h5v1h-5zM130 160h2v1h-2zM133 160h1v1h-1zM139 160h4v1h-4zM144 160h5v1h-5zM150 160h3v1h-3zM157 160h2v1h-2zM162 160h8v1h-8zM126 161h10v1h-10zM137 161h1v1h-1zM139 161h5v1h-5zM145 161h8v1h-8zM156 161h5v1h-5zM164 161h5v1h-5zM128 162h4v1h-4zM133 162h5v1h-5zM140 162h4v1h-4zM145 162h8v1h-8zM155 162h4v1h-4zM160 162h2v1h-2zM163 162h6v1h-6zM129 163h9v1h-9zM140 163h2v1h-2zM143 163h1v1h-1zM145 163h8v1h-8zM156 163h13v1h-13zM129 164h9v1h-9zM139 164h6v1h-6zM148 164h4v1h-4zM156 164h12v1h-12zM131 165h6v1h-6zM138 165h4v1h-4zM143 165h9v1h-9zM158 165h6v1h-6zM139 166h12v1h-12zM162 166h1v1h-1zM139 167h9v1h-9zM141 168h6v1h-6z" fill="#000"/>
</svg>

<div class="t" style="left:15px;top:319px;font-weight:bold;letter-spacing:0.38px">Transformasjon 1</div>

<!-- notebook -->
<div class="a" style="left:27px;top:357px;width:590px;height:121px;border:1px solid #919B9C;background:linear-gradient(#FCFCFE,#F0F0EC);box-shadow:1px 1px 0 #D2D0C4"></div>
<div class="a" style="left:131px;top:339px;width:106px;height:19px;border:1px solid #919B9C;border-bottom:none;border-radius:3px 3px 0 0;background:linear-gradient(#FFFFFF,#ECEBE6)"></div>
<div class="t" style="left:135px;top:344px">Fargetransformasjon</div>
<div class="a" style="left:27px;top:337px;width:104px;height:21px;border-left:1px solid #919B9C;background:#FCFCFE"></div>
<div class="a" style="left:27px;top:336px;width:105px;height:4px;border-radius:3px 3px 0 0;background:linear-gradient(#E68B2C 0,#F5A623 1px,#FFC73C 3px,#FDE4A8 4px)"></div>
<div class="t" style="left:34px;top:343px">Romtransformasjon</div>

<div class="t" style="left:40px;top:377px">X:</div>
<div class="entry" style="left:62px;top:373px;width:59px"></div><div class="t" style="left:65px;top:377px;letter-spacing:0.15px">0,307</div>
<div class="spin" style="left:121px;top:373px"><svg width="10" height="19"><path d="M1.9 6.6 L4.8 4 L7.7 6.6 M1.9 12.4 L4.8 15 L7.7 12.4" stroke="#3F5478" stroke-width="1.9" fill="none"/></svg></div>
<div class="t" style="left:143px;top:377px">Skalering:</div>
<div class="entry" style="left:195px;top:373px;width:60px"></div><div class="t" style="left:199px;top:377px;letter-spacing:0.15px">0,451</div>
<div class="spin" style="left:255px;top:373px"><svg width="10" height="19"><path d="M1.9 6.6 L4.8 4 L7.7 6.6 M1.9 12.4 L4.8 15 L7.7 12.4" stroke="#3F5478" stroke-width="1.9" fill="none"/></svg></div>
<div class="t" style="left:277px;top:377px">Asymmetri:</div>
<div class="entry" style="left:335px;top:373px;width:60px"></div><div class="t" style="left:339px;top:377px;letter-spacing:0.15px">1,000</div>
<div class="spin" style="left:395px;top:373px"><svg width="10" height="19"><path d="M1.9 6.6 L4.8 4 L7.7 6.6 M1.9 12.4 L4.8 15 L7.7 12.4" stroke="#3F5478" stroke-width="1.9" fill="none"/></svg></div>

<div class="t" style="left:40px;top:408px">Y:</div>
<div class="entry" style="left:62px;top:405px;width:59px"></div><div class="t" style="left:65px;top:408px;letter-spacing:0.15px">0,257</div>
<div class="spin" style="left:121px;top:405px"><svg width="10" height="19"><path d="M1.9 6.6 L4.8 4 L7.7 6.6 M1.9 12.4 L4.8 15 L7.7 12.4" stroke="#3F5478" stroke-width="1.9" fill="none"/></svg></div>
<div class="t" style="left:143px;top:412px">Vinkel:</div>
<div class="entry" style="left:195px;top:405px;width:60px"></div><div class="t" style="left:199px;top:408px;letter-spacing:0.15px">-22,468</div>
<div class="spin" style="left:255px;top:405px"><svg width="10" height="19"><path d="M1.9 6.6 L4.8 4 L7.7 6.6 M1.9 12.4 L4.8 15 L7.7 12.4" stroke="#3F5478" stroke-width="1.9" fill="none"/></svg></div>
<div class="t" style="left:277px;top:408px">Forskyv:</div>
<div class="entry" style="left:335px;top:405px;width:60px"></div><div class="t" style="left:339px;top:408px;letter-spacing:0.15px">0,000</div>
<div class="spin" style="left:395px;top:405px"><svg width="10" height="19"><path d="M1.9 6.6 L4.8 4 L7.7 6.6 M1.9 12.4 L4.8 15 L7.7 12.4" stroke="#3F5478" stroke-width="1.9" fill="none"/></svg></div>

<div class="a" style="left:43px;top:440px;width:13px;height:13px;border:1px solid #1C5180;background:linear-gradient(135deg,#DCDCD7,#FFFFFF)"></div>
<div class="t" style="left:60px;top:441px">Spegelvend</div>

<!-- slider -->
<div class="t" style="left:26px;top:488px">Relativ slump:</div>
<div class="a" style="left:100px;top:493px;width:440px;height:2px;border-top:1px solid #9D9C99"></div>
<div class="a" style="left:186px;top:485px;width:10px;height:17px;border:1px solid #8899AA;border-radius:2px;background:linear-gradient(#3DC73D 0,#21A121 2px,#F4F4F0 2px,#E8E8E2 13px,#21A121 13px,#3DC73D 15px)"></div>
<div class="entry" style="left:548px;top:483px;width:60px;height:21px"></div><div class="t" style="left:552px;top:488px;letter-spacing:0.15px">1,000</div>
<div class="spin" style="left:608px;top:484px;height:19px"><svg width="10" height="19"><path d="M1.9 6.6 L4.8 4 L7.7 6.6 M1.9 12.4 L4.8 15 L7.7 12.4" stroke="#3F5478" stroke-width="1.9" fill="none"/></svg></div>

<!-- buttons -->
<div class="btn" style="left:16px;width:82px"><div class="t" style="left:0;width:80px;top:6px;text-align:center"><span class="u">H</span>jelp</div></div>
<div class="btn" style="left:183px;width:81px"><div class="t" style="left:0;width:79px;top:6px;text-align:center"><span class="u">O</span>pna</div></div>
<div class="btn" style="left:271px;width:82px"><div class="t" style="left:0;width:80px;top:6px;text-align:center"><span class="u">L</span>agra</div></div>
<div class="btn" style="left:360px;width:81px"><div class="t" style="left:0;width:79px;top:6px;text-align:center"><span class="u">T</span>ilbakestill</div></div>
<div class="btn" style="left:449px;width:81px"><div class="t" style="left:-1px;width:79px;top:6px;text-align:center"><span class="u">O</span>K</div></div>
<div class="btn" style="left:537px;width:81px"><div class="t" style="left:-1px;width:79px;top:6px;text-align:center;letter-spacing:0.25px">A<span class="u">v</span>bryt</div></div>
</body></html>
